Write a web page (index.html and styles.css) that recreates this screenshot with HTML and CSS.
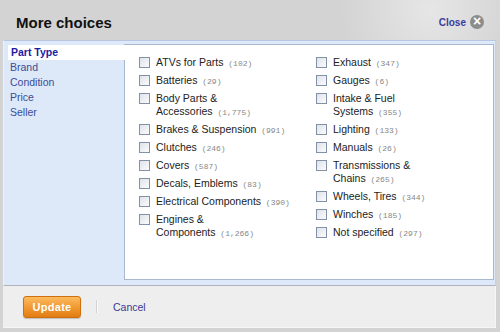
FILE: index.html
```
<!DOCTYPE html>
<html>
<head>
    <title>More choices</title>
    <link rel="stylesheet" href="styles.css">
</head>
<body>
    <div class="dialog">
        <div class="header">
            <h1>More choices</h1>
            <a class="close" href="#">Close <span class="close-icon">&times;</span></a>
        </div>

        <div class="panel">
            <ul class="tabs">
                <li class="active">Part Type</li>
                <li>Brand</li>
                <li>Condition</li>
                <li>Price</li>
                <li>Seller</li>
            </ul>
            <div class="choices">
                <ul class="column">
                    <li><span class="box"></span><span>ATVs for Parts<span class="count"> (102)</span></span></li>
                    <li><span class="box"></span><span>Batteries<span class="count"> (29)</span></span></li>
                    <li><span class="box"></span><span>Body Parts &amp;<br>Accessories<span class="count"> (1,775)</span></span></li>
                    <li><span class="box"></span><span>Brakes &amp; Suspension<span class="count"> (991)</span></span></li>
                    <li><span class="box"></span><span>Clutches<span class="count"> (246)</span></span></li>
                    <li><span class="box"></span><span>Covers<span class="count"> (587)</span></span></li>
                    <li><span class="box"></span><span>Decals, Emblems<span class="count"> (83)</span></span></li>
                    <li><span class="box"></span><span>Electrical Components<span class="count"> (390)</span></span></li>
                    <li><span class="box"></span><span>Engines &amp;<br>Components<span class="count"> (1,266)</span></span></li>
                </ul>
                <ul class="column">
                    <li><span class="box"></span><span>Exhaust<span class="count"> (347)</span></span></li>
                    <li><span class="box"></span><span>Gauges<span class="count"> (6)</span></span></li>
                    <li><span class="box"></span><span>Intake &amp; Fuel<br>Systems<span class="count"> (355)</span></span></li>
                    <li><span class="box"></span><span>Lighting<span class="count"> (133)</span></span></li>
                    <li><span class="box"></span><span>Manuals<span class="count"> (26)</span></span></li>
                    <li><span class="box"></span><span>Transmissions &amp;<br>Chains<span class="count"> (265)</span></span></li>
                    <li><span class="box"></span><span>Wheels, Tires<span class="count"> (344)</span></span></li>
                    <li><span class="box"></span><span>Winches<span class="count"> (185)</span></span></li>
                    <li><span class="box"></span><span>Not specified<span class="count"> (297)</span></span></li>
                </ul>
            </div>
        </div>

        <div class="footer">
            <button class="update">Update</button>
            <span class="divider"></span>
            <a class="cancel" href="#">Cancel</a>
        </div>
    </div>
</body>
</html>
```

FILE: styles.css
```
body {
    margin: 0;
    background: #d0d0d0;
    font-family: "Liberation Sans", Arial, sans-serif;
}
ul {
    list-style: none;
    margin: 0;
    padding: 0;
}
.dialog {
    width: 500px;
    height: 332px;
    background: #d3d3d3;
}
.header {
    height: 40px;
    display: flex;
    align-items: center;
    justify-content: space-between;
    padding: 0 16px 0 16px;
    box-sizing: border-box;
    background:
        radial-gradient(circle at 430px 10px, rgba(235, 235, 235, 0.8), rgba(211, 211, 211, 0) 90px),
        #d3d3d3;
}
h1 {
    margin: 4px 0 0;
    font-size: 15px;
    color: #111;
}
.close {
    display: flex;
    align-items: center;
    gap: 4px;
    margin-top: 4px;
    font-size: 10px;
    font-weight: bold;
    color: #3b3b9e;
    text-decoration: none;
}
.close-icon {
    width: 14px;
    height: 14px;
    border-radius: 50%;
    background: #8c8c8c;
    color: #fff;
    font-size: 14px;
    line-height: 13px;
    text-align: center;
}
.panel {
    display: flex;
    height: 246px;
    margin: 0 4px 0 3px;
    padding: 3px 4px 5px 4px;
    box-sizing: border-box;
    background: #dde8f9;
    border-top: 1px solid #b8c7df;
    border-left: 1px solid #eef3fb;
    border-right: 1px solid #c4d2e8;
    border-bottom: 1px solid #aeb3bf;
}
.tabs {
    flex: none;
    width: 116px;
    padding-top: 1px;
    font-size: 10.5px;
    line-height: 15px;
    color: #3b4c95;
}
.tabs li {
    padding-left: 2px;
}
.tabs .active {
    position: relative;
    margin-right: -1px;
    padding-left: 3px;
    background: #fff;
    font-weight: bold;
    color: #1c1ca2;
}
.choices {
    flex: 1;
    display: flex;
    padding: 11px 0 0 14px;
    background: #fff;
    border: 1px solid #a9b8d1;
    font-size: 10.5px;
    line-height: 13px;
    color: #222;
}
.column {
    width: 177px;
}
.column + .column {
    flex: 1;
}
.column li {
    display: flex;
    align-items: flex-start;
    gap: 6px;
    margin-bottom: 5px;
}
.box {
    flex: none;
    width: 9px;
    height: 9px;
    margin-top: 1px;
    border: 1px solid #8391a6;
    background: linear-gradient(135deg, #dfe3ea, #fbfbfc);
}
.count {
    font-family: "Liberation Mono", "Courier New", monospace;
    font-size: 8px;
    line-height: 8px;
    color: #888;
}
.footer {
    display: flex;
    align-items: center;
    height: 42px;
    margin: 0 4px 0 3px;
    padding-left: 20px;
    box-sizing: border-box;
    background: #eeeeee;
    border-bottom: 1px solid #f6f6f6;
    border-right: 1px solid #f6f6f6;
}
.update {
    width: 58px;
    height: 22px;
    padding: 0;
    border: 1px solid #cf6f0e;
    border-radius: 3px;
    background: linear-gradient(#fdbb5f, #f19a33 50%, #e37c14);
    box-shadow: 0 1px 1px rgba(0, 0, 0, 0.2);
    color: #fff;
    font-family: "Liberation Sans", Arial, sans-serif;
    font-size: 11px;
    font-weight: bold;
    letter-spacing: 0.3px;
    cursor: pointer;
}
.divider {
    width: 1px;
    height: 13px;
    margin: 0 15px;
    background: #d4d4d4;
    border-right: 1px solid #fafafa;
}
.cancel {
    font-size: 10.5px;
    color: #3a3a8e;
    text-decoration: none;
}
```
